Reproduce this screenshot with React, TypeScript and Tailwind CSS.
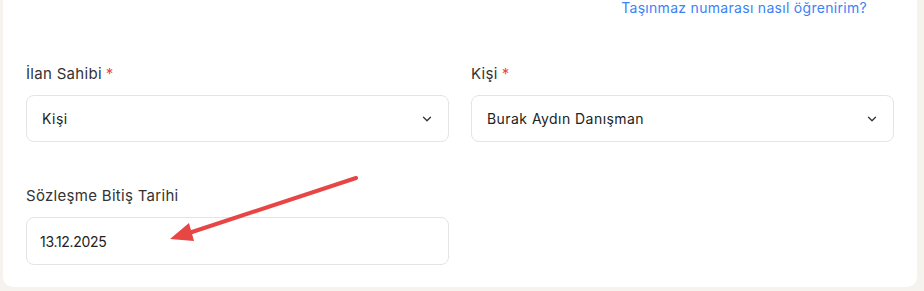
import { ChevronDown } from "lucide-react"

function Label({ text, required }: { text: string; required?: boolean }) {
  return (
    <div className="text-[15px] leading-5 text-[#333333] mb-[11px] tracking-[0.3px]">
      {text}
      {required && <span className="text-[#e5484d] ml-1">*</span>}
    </div>
  )
}

function SelectBox({ value }: { value: string }) {
  return (
    <div className="h-[47px] flex items-center justify-between pl-[15px] pr-[14px] bg-white border border-[#e4e4e4] rounded-lg text-[14px] tracking-[0.45px] text-[#222222]">
      <span>{value}</span>
      <ChevronDown size={14} strokeWidth={2.2} className="text-[#333333]" />
    </div>
  )
}

export default function App() {
  return (
    <div className="min-h-[291px] bg-[#f6f2ee] px-[3px] pb-[4px] font-['Inter','Open_Sans',sans-serif]">
      <div className="relative bg-white rounded-b-[10px] px-[23px] pb-[22px] w-[914px]">
        <div className="flex justify-end pr-[27px] h-4">
          <a href="#" className="text-[14px] leading-4 text-[#3b82f6] tracking-[0.3px]">
            Taşınmaz numarası nasıl öğrenirim?
          </a>
        </div>

        <div className="grid grid-cols-2 gap-x-[22px] mt-[48px]">
          <div>
            <Label text="İlan Sahibi" required />
            <SelectBox value="Kişi" />
          </div>
          <div>
            <Label text="Kişi" required />
            <SelectBox value="Burak Aydın Danışman" />
          </div>
        </div>

        <div className="grid grid-cols-2 gap-x-[22px] mt-[44px]">
          <div>
            <Label text="Sözleşme Bitiş Tarihi" />
            <div className="h-[48px] flex items-center pl-[13px] bg-white border border-[#e4e4e4] rounded-lg text-[14px] tracking-[-0.3px] text-[#222222]">
              13.12.2025
            </div>
          </div>
        </div>

        {/* annotation arrow */}
        <svg className="absolute left-0 top-0 pointer-events-none" width="914" height="287">
          <line x1="353" y1="178" x2="186" y2="233" stroke="#e84545" strokeWidth="4" strokeLinecap="round" />
          <polygon points="167,239 186,223 191,241" fill="#e84545" />
        </svg>
      </div>
    </div>
  )
}
